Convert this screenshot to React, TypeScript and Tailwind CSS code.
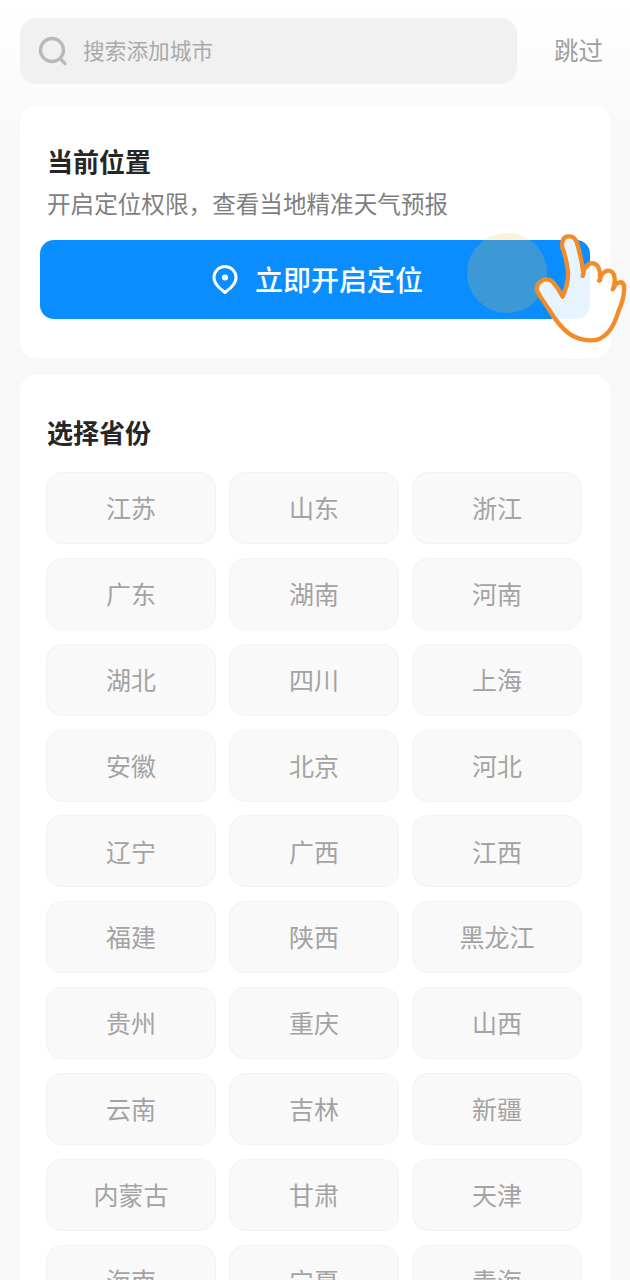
const provinces = [
  "江苏", "山东", "浙江",
  "广东", "湖南", "河南",
  "湖北", "四川", "上海",
  "安徽", "北京", "河北",
  "辽宁", "广西", "江西",
  "福建", "陕西", "黑龙江",
  "贵州", "重庆", "山西",
  "云南", "吉林", "新疆",
  "内蒙古", "甘肃", "天津",
  "海南", "宁夏", "青海",
]

const HandPointer = () => (
  <svg viewBox="330 30 300 345" className="absolute left-[490px] top-[-10px] h-[115px] w-[100px]">
    <path
      d="M428 62 C434 44 462 44 470 66 C478 92 486 125 490 160 C492 138 510 124 526 132 C538 138 541 160 540 180 C544 156 562 146 576 156 C586 164 586 190 580 205 C588 186 606 180 612 196 C614 220 606 250 596 272 C584 312 570 340 540 356 C510 368 470 358 444 338 C420 320 404 296 388 270 C374 248 356 226 350 208 C350 184 378 170 396 184 C410 196 420 216 428 230 C440 200 446 176 444 156 C440 124 434 100 428 86 C426 78 426 70 428 62 Z"
      fill="rgba(255,255,255,0.9)"
      stroke="#f28c28"
      strokeWidth="13"
      strokeLinejoin="round"
    />
    <path d="M490 160 L488 168 M540 180 L537 182 M580 205 L578 208" stroke="#f28c28" strokeWidth="13" strokeLinecap="round" fill="none" />
  </svg>
)

export default function App() {
  return (
    <div className="h-[1280px] overflow-hidden bg-linear-to-b from-white to-[#f8f8f8] to-[12%] px-5 pt-[18px] font-['Noto_Sans_CJK_SC',sans-serif]">
      <div className="flex items-center">
        <div className="flex h-[66px] w-[497px] items-center rounded-2xl bg-[#f1f1f1] pl-[17px]">
          <svg viewBox="0 0 32 32" className="h-8 w-8" fill="none" stroke="#b9b9b9">
            <circle cx="15" cy="15" r="11.5" strokeWidth="3.4" />
            <path d="M23.5 24 L28 28.5" strokeWidth="3.4" strokeLinecap="round" />
          </svg>
          <span className="ml-[14px] pb-[2px] text-[21.7px] text-[#a9a9a9]">搜索添加城市</span>
        </div>
        <span className="ml-[37px] pb-[2px] text-[24.5px] text-[#a0a0a0]">跳过</span>
      </div>

      <div className="mt-[21px] h-[253px] w-[590px] rounded-2xl bg-white px-5 pt-[39px]">
        <h2 className="pl-[7px] text-[26px] leading-[34px] font-bold text-[#262626]">当前位置</h2>
        <p className="mt-[9px] pl-[7px] text-[23.6px] leading-[32px] text-[#7f7f7f]">开启定位权限，查看当地精准天气预报</p>
        <div className="relative mt-[21px] flex h-[79px] w-[550px] items-center justify-center rounded-[14px] bg-[#0a8eff] pl-[5px]">
          <svg viewBox="0 0 26 30" className="h-[30px] w-[26px]" fill="none" stroke="white" strokeWidth="3">
            <path d="M13 27.5 C8 23.5 2 19 2 12.5 A11 11 0 0 1 24 12.5 C24 19 18 23.5 13 27.5 Z" strokeLinejoin="round" />
            <circle cx="13" cy="12.5" r="3" fill="white" stroke="none" />
          </svg>
          <span className="ml-[17px] pb-[2px] text-[28px] font-medium text-white">立即开启定位</span>
          <div className="absolute left-[427px] top-[-7px] h-20 w-20 rounded-full bg-[rgba(245,190,70,0.22)]" />
          <HandPointer />
        </div>
      </div>

      <div className="mt-[17px] w-[590px] rounded-2xl bg-white pl-[26px] pt-[40px]">
        <h2 className="pl-px text-[26px] leading-[34px] font-bold text-[#262626]">选择省份</h2>
        <div className="mt-[23px] grid w-[536px] grid-cols-3 gap-x-[13px] gap-y-[13.85px]">
          {provinces.map((name) => (
            <div
              key={name}
              className="flex h-[72px] items-center justify-center rounded-2xl border border-[#f3f3f3] bg-[#f9f9f9] text-[25px] text-[#a3a3a3]"
            >
              {name}
            </div>
          ))}
        </div>
      </div>
    </div>
  )
}
